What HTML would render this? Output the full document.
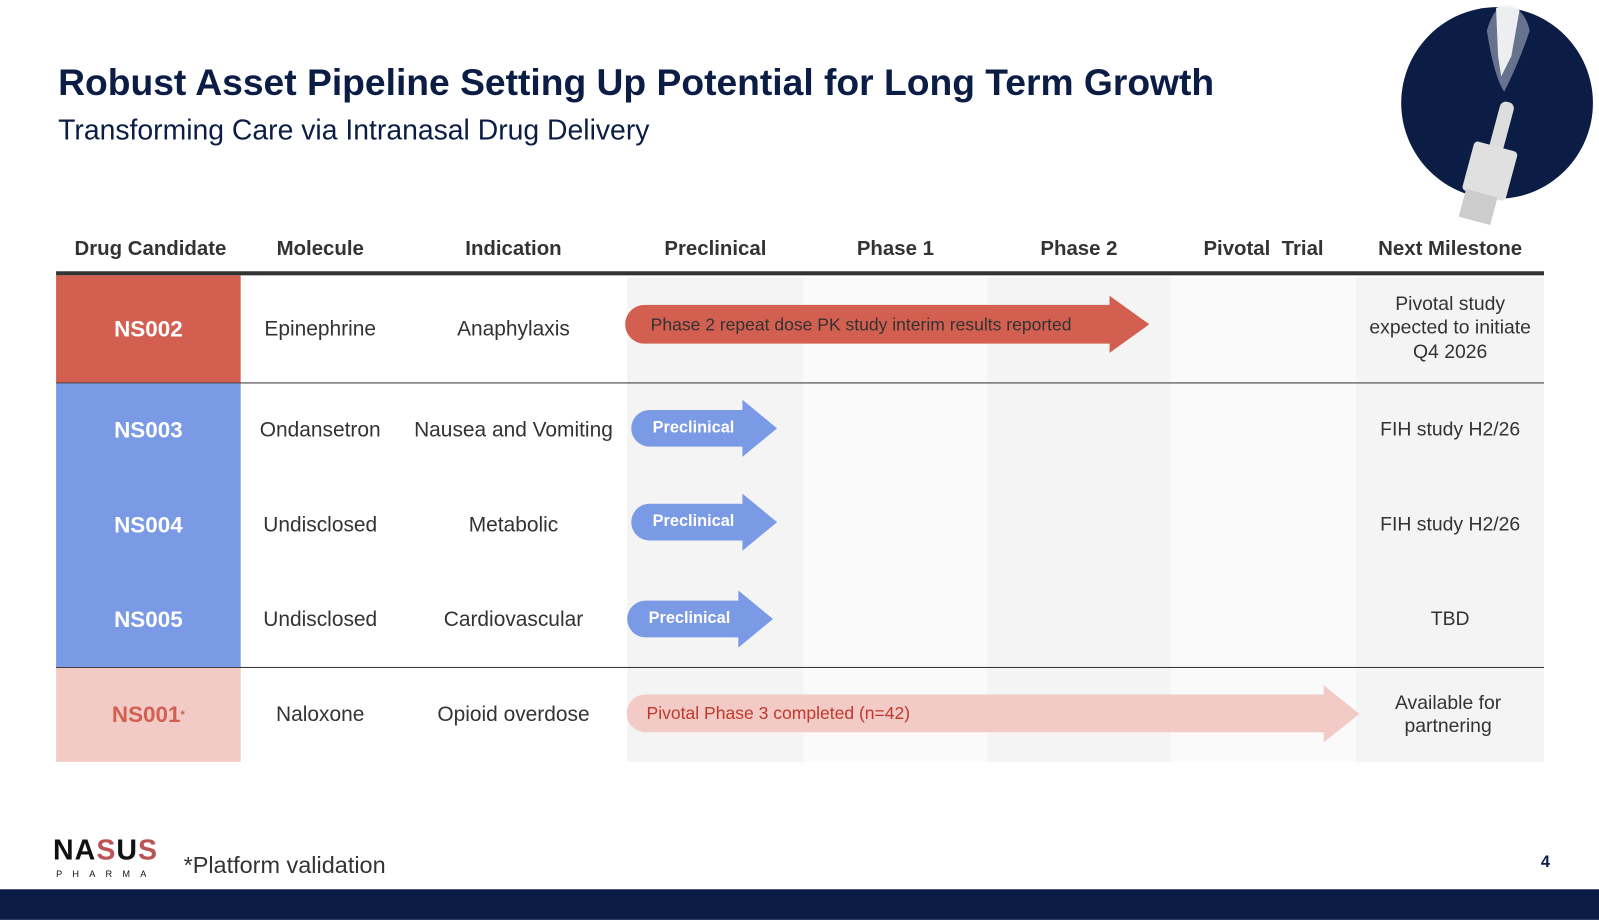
<!DOCTYPE html>
<html><head><meta charset="utf-8"><style>
*{margin:0;padding:0;box-sizing:border-box}
body{width:1599px;height:899px;background:#fff;position:relative;overflow:hidden;font-family:"Liberation Sans",sans-serif;color:#222}
#w{position:absolute;left:0;top:0;width:1568px;height:882px;transform:scale(1.0198);transform-origin:0 0}
.a{position:absolute}
.c{position:absolute;display:flex;align-items:center;justify-content:center;text-align:center}
.h{font-weight:bold;font-size:20px;color:#333;top:232px;height:24px}
.t{font-size:20.5px;color:#333}
.n{color:#fff;font-weight:bold;font-size:22px}
.m{font-size:19px;color:#333}
.col{position:absolute;top:272px;height:475px}
</style></head><body><div id="w">
<div class="a" style="left:57px;top:60px;font-size:36.5px;font-weight:bold;color:#0b1d45">Robust Asset Pipeline Setting Up Potential for Long Term Growth</div>
<div class="a" style="left:57px;top:112px;font-size:27.8px;color:#0b1d45">Transforming Care via Intranasal Drug Delivery</div>
<svg class="a" style="left:1370px;top:0" width="200" height="225">
<circle cx="98" cy="101" r="94" fill="#0b1d45"/>
<path d="M88 30 Q95 5 108 5 Q125 8 130 30 Q120 60 105 90 Q95 75 88 30 Z" fill="#d8dce6" opacity=".45"/>
<path d="M97 8 Q108 2 120 10 L112 55 L102 75 L99 55 Z" fill="#f4f4f4" opacity=".95"/>
<g transform="rotate(15 80 170)"><rect x="83" y="95" width="14" height="60" rx="6" fill="#ddd"/><rect x="68" y="140" width="44" height="50" rx="4" fill="#e0e0e0"/><rect x="72" y="188" width="32" height="28" fill="#ccc"/></g>
</svg>
<div class="col" style="left:615px;width:173px;background:#f4f4f4"></div>
<div class="col" style="left:788px;width:180px;background:#fafafa"></div>
<div class="col" style="left:968px;width:180px;background:#f4f4f4"></div>
<div class="col" style="left:1148px;width:182px;background:#fafafa"></div>
<div class="col" style="left:1330px;width:184px;background:#f4f4f4"></div>
<div class="c h" style="left:55px;width:185px">Drug Candidate</div>
<div class="c h" style="left:236px;width:156px">Molecule</div>
<div class="c h" style="left:392px;width:223px">Indication</div>
<div class="c h" style="left:615px;width:173px">Preclinical</div>
<div class="c h" style="left:788px;width:180px">Phase 1</div>
<div class="c h" style="left:968px;width:180px">Phase 2</div>
<div class="c h" style="left:1148px;width:182px">Pivotal&nbsp; Trial</div>
<div class="c h" style="left:1330px;width:184px">Next Milestone</div>
<div class="a" style="left:55px;top:266px;width:1459px;height:4px;background:#333"></div>
<div class="a" style="left:55px;top:375px;width:1459px;height:1px;background:#333"></div>
<div class="a" style="left:55px;top:654px;width:1459px;height:1px;background:#333"></div>
<div class="c n" style="left:55px;top:270px;width:181px;height:105px;background:#d35f51">NS002</div>
<div class="a" style="left:55px;top:376px;width:181px;height:278px;background:#7a9ae6"></div>
<div class="c n" style="left:55px;top:376px;width:181px;height:92px">NS003</div>
<div class="c n" style="left:55px;top:468px;width:181px;height:93px">NS004</div>
<div class="c n" style="left:55px;top:561px;width:181px;height:93px">NS005</div>
<div class="c n" style="left:55px;top:655px;width:181px;height:92px;background:#f2cac6;color:#d35f51">NS001<sup style="font-size:11px">*</sup></div>
<div class="c t" style="left:236px;top:270px;width:156px;height:105px">Epinephrine</div>
<div class="c t" style="left:392px;top:270px;width:223px;height:105px">Anaphylaxis</div>
<div class="c t" style="left:236px;top:376px;width:156px;height:92px">Ondansetron</div>
<div class="c t" style="left:392px;top:376px;width:223px;height:92px">Nausea and Vomiting</div>
<div class="c t" style="left:236px;top:468px;width:156px;height:93px">Undisclosed</div>
<div class="c t" style="left:392px;top:468px;width:223px;height:93px">Metabolic</div>
<div class="c t" style="left:236px;top:561px;width:156px;height:93px">Undisclosed</div>
<div class="c t" style="left:392px;top:561px;width:223px;height:93px">Cardiovascular</div>
<div class="c t" style="left:236px;top:655px;width:156px;height:92px">Naloxone</div>
<div class="c t" style="left:392px;top:655px;width:223px;height:92px">Opioid overdose</div>
<div class="c m" style="left:1330px;top:286px;width:184px;height:72px;line-height:23.5px">Pivotal study<br>expected to initiate<br>Q4 2026</div>
<div class="c m" style="left:1330px;top:376px;width:184px;height:92px">FIH study H2/26</div>
<div class="c m" style="left:1330px;top:468px;width:184px;height:93px">FIH study H2/26</div>
<div class="c m" style="left:1330px;top:561px;width:184px;height:93px">TBD</div>
<div class="c m" style="left:1328px;top:676px;width:184px;height:50px;line-height:23.5px">Available for<br>partnering</div>
<svg class="a" style="left:0;top:0" width="1568" height="882">
<path d="M632 299 H1088 V290 L1127 318 L1088 346 V337 H632 A19 19 0 0 1 632 299Z" fill="#d35f51"/>
<path d="M637 402 H728 V392 L762 420 L728 448 V438 H637 A18 18 0 0 1 637 402Z" fill="#7a9ae6"/>
<path d="M637 494 H728 V484 L762 512 L728 540 V530 H637 A18 18 0 0 1 637 494Z" fill="#7a9ae6"/>
<path d="M633 589 H724 V579 L758 607 L724 635 V625 H633 A18 18 0 0 1 633 589Z" fill="#7a9ae6"/>
<path d="M633 681 H1298 V672 L1333 700 L1298 728 V718 H633 A18 18 0 0 1 633 681Z" fill="#f2cac6"/>
</svg>
<div class="a" style="left:638px;top:308px;font-size:17.2px;color:#333">Phase 2 repeat dose PK study interim results reported</div>
<div class="a" style="left:640px;top:411px;font-size:16px;color:#fff;font-weight:bold">Preclinical</div>
<div class="a" style="left:640px;top:503px;font-size:16px;color:#fff;font-weight:bold">Preclinical</div>
<div class="a" style="left:636px;top:598px;font-size:16px;color:#fff;font-weight:bold">Preclinical</div>
<div class="a" style="left:634px;top:689px;font-size:17.2px;color:#c0392b">Pivotal Phase 3 completed (n=42)</div>
<div class="a" style="left:52px;top:818px;font-size:28px;font-weight:bold;color:#111;letter-spacing:1px">NA<span style="color:#b55">S</span>U<span style="color:#b55">S</span></div>
<div class="a" style="left:55px;top:852px;font-size:9px;letter-spacing:10px;color:#111">PHARMA</div>
<div class="a" style="left:180px;top:835px;font-size:23px;color:#333">*Platform validation</div>
<div class="a" style="left:1511px;top:837px;font-size:16px;font-weight:bold;color:#0b1d45">4</div>
<div class="a" style="left:0;top:872px;width:1568px;height:30px;background:#0b1d45"></div>
</div></body></html>
